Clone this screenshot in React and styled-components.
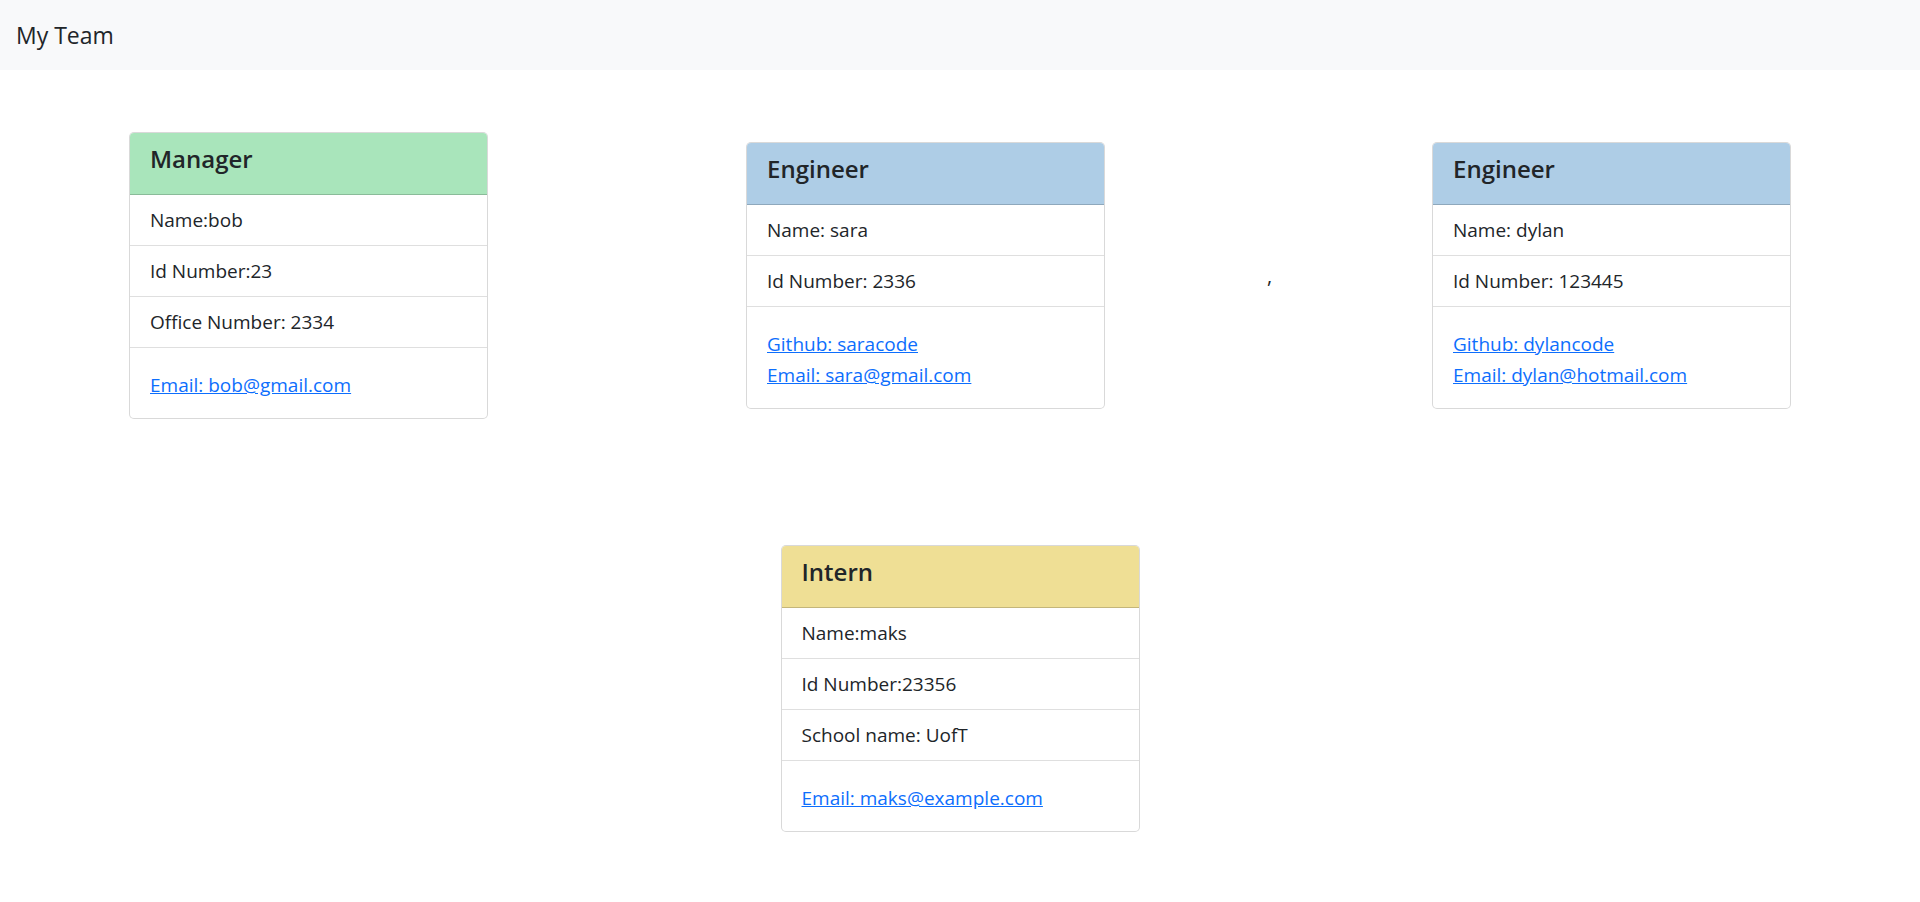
import React from 'react';
import styled, { createGlobalStyle } from 'styled-components';

// ========== GLOBAL ==========

const GlobalStyle = createGlobalStyle`
  * {
    box-sizing: border-box;
  }

  body {
    margin: 0;
    background: #ffffff;
    color: #212529;
    font-family: "Open Sans", "Noto Sans", Arial, sans-serif;
  }
`;

const headerColors = {
  manager: '#a9e5bb',
  engineer: '#aecde6',
  intern: '#efdf95',
};

// ========== STYLED COMPONENTS ==========

const Navbar = styled.nav`
  height: 70px;
  background: #f8f9fa;
  display: flex;
  align-items: center;
  padding: 0 16px;
`;

const Brand = styled.span`
  font-size: 23px;
  color: #212529;
  line-height: 1;
`;

const Main = styled.main`
  padding-top: 62px;
  padding-bottom: 60px;
`;

const TopRow = styled.div`
  display: flex;
  justify-content: space-around;
  align-items: center;
`;

const EngineerGroup = styled.div`
  display: flex;
  align-items: center;
  gap: 162px;
`;

const Comma = styled.span`
  display: inline-block;
  width: 3px;
  font-size: 20px;
  line-height: 30px;
`;

const BottomRow = styled.div`
  display: flex;
  justify-content: center;
  margin-top: 126px;
`;

const Card = styled.div`
  width: 359px;
  border: 1px solid rgba(0, 0, 0, 0.15);
  border-radius: 5px;
  overflow: hidden;
  background: #ffffff;
`;

const CardHeader = styled.div`
  background: ${props => headerColors[props.role]};
  border-bottom: 1px solid rgba(0, 0, 0, 0.18);
  padding: 11px 20px 20px;
`;

const Title = styled.h5`
  margin: 0;
  font-size: 24px;
  line-height: 30px;
  font-weight: 600;
  color: #212529;
`;

const List = styled.ul`
  list-style: none;
  margin: 0;
  padding: 0;
`;

const Item = styled.li`
  padding: 10px 20px;
  font-size: 19px;
  line-height: 30px;
  color: #212529;
  border-bottom: 1px solid rgba(0, 0, 0, 0.125);
`;

const LinkItem = styled.li`
  padding: 22px 20px 17px;
  font-size: 19px;
  line-height: 31px;
  display: flex;
  flex-direction: column;
  align-items: flex-start;
`;

const Link = styled.a`
  color: #0d6efd;
  text-decoration: underline;
`;

// ========== COMPONENT ==========

const EmployeeCard = ({ role, title, rows, links }) => (
  <Card>
    <CardHeader role={role}>
      <Title>{title}</Title>
    </CardHeader>
    <List>
      {rows.map((row, i) => (
        <Item key={i}>{row}</Item>
      ))}
      <LinkItem>
        {links.map((link, i) => (
          <Link key={i} href={link.href}>{link.label}</Link>
        ))}
      </LinkItem>
    </List>
  </Card>
);

const App = () => {
  return (
    <>
      <GlobalStyle />
      <Navbar>
        <Brand>My Team</Brand>
      </Navbar>
      <Main>
        <TopRow>
          <EmployeeCard
            role="manager"
            title="Manager"
            rows={['Name:bob', 'Id Number:23', 'Office Number: 2334']}
            links={[{ label: 'Email: bob@gmail.com', href: 'mailto:bob@gmail.com' }]}
          />
          <EngineerGroup>
            <EmployeeCard
              role="engineer"
              title="Engineer"
              rows={['Name: sara', 'Id Number: 2336']}
              links={[
                { label: 'Github: saracode', href: '#saracode' },
                { label: 'Email: sara@gmail.com', href: 'mailto:sara@gmail.com' },
              ]}
            />
            <Comma>,</Comma>
            <EmployeeCard
              role="engineer"
              title="Engineer"
              rows={['Name: dylan', 'Id Number: 123445']}
              links={[
                { label: 'Github: dylancode', href: '#dylancode' },
                { label: 'Email: dylan@hotmail.com', href: 'mailto:dylan@hotmail.com' },
              ]}
            />
          </EngineerGroup>
        </TopRow>
        <BottomRow>
          <EmployeeCard
            role="intern"
            title="Intern"
            rows={['Name:maks', 'Id Number:23356', 'School name: UofT']}
            links={[{ label: 'Email: maks@example.com', href: 'mailto:maks@example.com' }]}
          />
        </BottomRow>
      </Main>
    </>
  );
};

export default App;
